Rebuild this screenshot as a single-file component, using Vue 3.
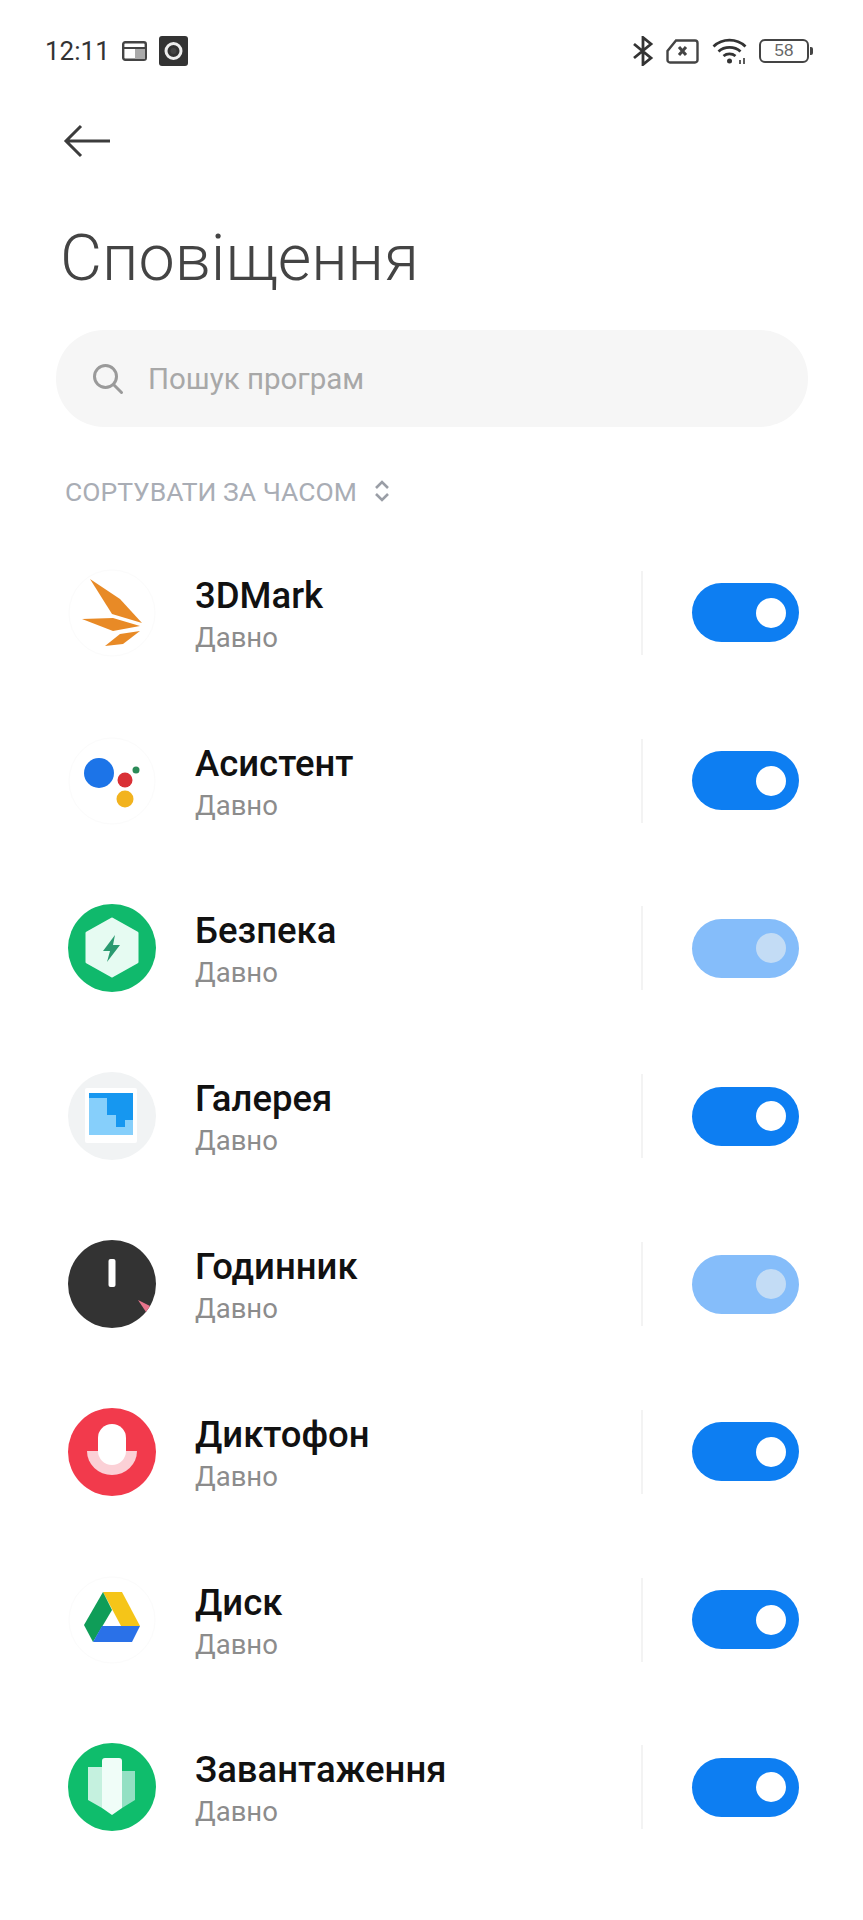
<script setup>
const apps = [
  { name: '3DMark', icon: 'mark', on: true },
  { name: 'Асистент', icon: 'assistant', on: true },
  { name: 'Безпека', icon: 'security', on: false },
  { name: 'Галерея', icon: 'gallery', on: true },
  { name: 'Годинник', icon: 'clock', on: false },
  { name: 'Диктофон', icon: 'recorder', on: true },
  { name: 'Диск', icon: 'drive', on: true },
  { name: 'Завантаження', icon: 'downloads', on: true },
]
</script>

<template>
  <main class="page">
    <div class="status">
      <div class="status-left">
        <span class="time">12:11</span>
        <svg width="25" height="20" viewBox="0 0 25 20" fill="none" stroke="#444" stroke-width="2.4">
          <rect x="1.2" y="1.2" width="22.6" height="17.6" rx="2" />
          <path d="M1 7h23" stroke-width="2" />
          <rect x="13" y="8" width="10" height="10" fill="#aaa" stroke="none" />
        </svg>
        <svg width="29" height="30" viewBox="0 0 29 30">
          <rect width="29" height="30" rx="3" fill="#333" />
          <circle cx="14.5" cy="15" r="7.5" fill="none" stroke="#eee" stroke-width="3" />
          <circle cx="14.5" cy="15" r="3" fill="#444" />
        </svg>
      </div>
      <div class="status-right">
        <svg width="22" height="30" viewBox="0 0 22 30" fill="none" stroke="#333" stroke-width="2.8">
          <path d="M2 8l17 14-8 6.5V1.5l8 6.5L2 22" />
        </svg>
        <svg width="33" height="25" viewBox="0 0 33 25" fill="none" stroke="#444" stroke-width="2.4">
          <path d="M10 1.5h19a2.5 2.5 0 0 1 2.5 2.5v17a2.5 2.5 0 0 1-2.5 2.5H4A2.5 2.5 0 0 1 1.500 21v-9z" />
          <path d="M13 8l7 8M20 8l-7 8" stroke-width="3" />
        </svg>
        <svg width="35" height="28" viewBox="0 0 35 28" fill="none" stroke="#333" stroke-width="2.8">
          <path d="M1.500 9.500c9-8.500 23-8.500 32 0" />
          <path d="M6.500 14.500c6-5.500 16-5.500 22 0" />
          <path d="M11.500 19c3.500-2.800 8.500-2.800 12 0" />
          <circle cx="17.500" cy="24" r="2.500" fill="#333" stroke="none" />
          <path d="M28 27v-4M32 27v-6" stroke-width="1.600" />
        </svg>
        <div class="battery">
          <div class="battery-body">58</div>
          <div class="battery-tip"></div>
        </div>
      </div>
    </div>

    <div class="back">
      <svg width="48" height="34" viewBox="0 0 48 34" fill="none" stroke="#3c3c3c" stroke-width="3">
        <path d="M47 17H3M18 2L3 17l15 15" />
      </svg>
    </div>

    <h1>Сповіщення</h1>

    <div class="search">
      <svg width="32" height="32" viewBox="0 0 32 32" fill="none" stroke="#9a9a9a" stroke-width="3">
        <circle cx="13.500" cy="13.500" r="11" />
        <path d="M21.500 21.500l8 8" stroke-linecap="round" />
      </svg>
      <span>Пошук програм</span>
    </div>

    <div class="sort">
      <span>СОРТУВАТИ ЗА ЧАСОМ</span>
      <svg width="16" height="24" viewBox="0 0 16 24" fill="none" stroke="#9a9ea6" stroke-width="2.600">
        <path d="M2 9l6-6 6 6M2 15l6 6 6-6" />
      </svg>
    </div>

    <div class="list">
      <div v-for="app in apps" :key="app.name" class="row">
        <svg class="app-icon" width="88" height="88" viewBox="0 0 88 88">
          <template v-if="app.icon === 'mark'">
            <circle cx="44" cy="44" r="43" fill="#fff" stroke="#fbfbfb" />
            <path d="M22 10L52 30 74 54 44 45z" fill="#e88a26" />
            <path d="M14 50L45 49 72 57 45 62z" fill="#e88a26" />
            <path d="M37 77L52 65 72 62 55 75z" fill="#e88a26" />
          </template>
          <template v-else-if="app.icon === 'assistant'">
            <circle cx="44" cy="44" r="43" fill="#fff" stroke="#fbfbfb" />
            <circle cx="31" cy="36" r="15" fill="#1c74e8" />
            <circle cx="57" cy="43" r="7.500" fill="#d93035" />
            <circle cx="68" cy="33" r="3.500" fill="#2b8a57" />
            <circle cx="57" cy="62" r="8.500" fill="#f2b31e" />
          </template>
          <template v-else-if="app.icon === 'security'">
            <circle cx="44" cy="44" r="44" fill="#10b96c" />
            <path d="M44 15l25 14v29L44 72 19 58V29z" fill="#e6fbf2" stroke="#e6fbf2" stroke-width="3" stroke-linejoin="round" />
            <path d="M47 31L35 47h7l-3 11 13-17h-7z" fill="#2a9a70" />
          </template>
          <template v-else-if="app.icon === 'gallery'">
            <circle cx="44" cy="44" r="44" fill="#f1f3f4" />
            <rect x="17" y="16" width="52" height="55" rx="2" fill="#fff" />
            <rect x="21" y="21" width="44" height="42" fill="#86cffb" />
            <path d="M21 21h44v27h-8v7h-9V43h-9V26H21z" fill="#1697f0" />
          </template>
          <template v-else-if="app.icon === 'clock'">
            <circle cx="44" cy="44" r="44" fill="#333" />
            <rect x="40.500" y="19" width="7" height="28" rx="2" fill="#fff" />
            <path d="M70 60l12 6-4 6z" fill="#e8748c" />
          </template>
          <template v-else-if="app.icon === 'recorder'">
            <circle cx="44" cy="44" r="44" fill="#f23a4c" />
            <path d="M19 43h50a25 24 0 0 1-50 0z" fill="#fbd0d6" />
            <rect x="30" y="16" width="28" height="41" rx="14" fill="#fff" />
          </template>
          <template v-else-if="app.icon === 'drive'">
            <circle cx="44" cy="44" r="43" fill="#fff" stroke="#fbfbfb" />
            <path d="M35 16h19l18 34H53z" fill="#f5c518" />
            <path d="M35 16l9 18-19 32-9-17z" fill="#0f9d58" />
            <path d="M34 50h38l-8 16H25z" fill="#2a71e8" />
          </template>
          <template v-else>
            <circle cx="44" cy="44" r="44" fill="#0fbd6c" />
            <path d="M20 24h14v41l-14-8z" fill="#c5f1df" />
            <path d="M54 28h13v29l-13 8z" fill="#93e0c3" />
            <path d="M34 18q0-3 3-3h14q3 0 3 3v47L44 72l-10-7z" fill="#f0fdf8" />
          </template>
        </svg>
        <div class="info">
          <div class="name">{{ app.name }}</div>
          <div class="sub">Давно</div>
        </div>
        <div class="divider"></div>
        <div class="toggle" :class="{ disabled: !app.on }">
          <div class="knob"></div>
        </div>
      </div>
    </div>
  </main>
</template>

<style scoped>
.page {
  width: 863px;
  height: 1920px;
  overflow: hidden;
  background: #fff;
  font-family: Roboto, "Noto Sans", sans-serif;
}

.status {
  height: 100px;
  padding: 2px 50px 0 45px;
  box-sizing: border-box;
  display: flex;
  justify-content: space-between;
  align-items: center;
}

.status-left,
.status-right {
  display: flex;
  align-items: center;
}

.status-left {
  gap: 12px;
}

.status-right {
  gap: 12.500px;
}

.time {
  font-size: 26px;
  color: #333;
}

.battery {
  display: flex;
  align-items: center;
  gap: 1px;
}

.battery-body {
  width: 50px;
  height: 24px;
  box-sizing: border-box;
  border: 2.5px solid #444;
  border-radius: 6px;
  font-family: "Liberation Sans", sans-serif;
  font-size: 17px;
  line-height: 19px;
  text-align: center;
  color: #666;
}

.battery-tip {
  width: 3px;
  height: 8px;
  background: #444;
  border-radius: 0 2px 2px 0;
}

.back {
  height: 82px;
  padding-left: 63px;
  display: flex;
  align-items: center;
}

h1 {
  margin: 0;
  padding: 9px 0 0 60px;
  box-sizing: border-box;
  height: 148px;
  font-size: 64.700px;
  line-height: 134px;
  font-weight: 300;
  color: #444;
}

.search {
  width: 752px;
  height: 97px;
  margin-left: 56px;
  padding-left: 36px;
  box-sizing: border-box;
  border-radius: 48px;
  background: #f6f6f6;
  display: flex;
  align-items: center;
  gap: 24px;
  font-size: 29.500px;
  color: #a8a8a8;
}

.sort {
  height: 102px;
  padding: 26px 0 0 65px;
  box-sizing: border-box;
  display: flex;
  align-items: center;
  gap: 17px;
  font-size: 26.500px;
  color: #a9adb5;
}

.row {
  height: 167.800px;
  padding: 0 64px 0 68px;
  display: flex;
  align-items: center;
}

.app-icon {
  flex: none;
}

.info {
  margin-left: 39px;
  flex: 1;
  padding-top: 5px;
}

.name {
  font-size: 36.500px;
  line-height: 42px;
  font-weight: 500;
  color: #111;
}

.sub {
  margin-top: 3px;
  font-size: 27.500px;
  line-height: 36px;
  color: #8c8c8c;
}

.divider {
  width: 2px;
  height: 84px;
  background: #f3f3f3;
}

.toggle {
  width: 107px;
  height: 59px;
  margin-left: 49px;
  padding-right: 13px;
  box-sizing: border-box;
  border-radius: 30px;
  background: #0d7ef2;
  display: flex;
  align-items: center;
  justify-content: flex-end;
}

.knob {
  width: 30px;
  height: 30px;
  border-radius: 50%;
  background: #fff;
}

.toggle.disabled {
  background: #85bdfa;
}

.toggle.disabled .knob {
  background: #c3dcf5;
}
</style>
